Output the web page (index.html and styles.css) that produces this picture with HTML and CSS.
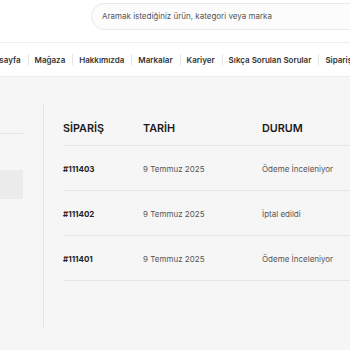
FILE: index.html
```html
<!DOCTYPE html>
<html lang="tr">
<head>
<meta charset="utf-8">
<link rel="stylesheet" href="styles.css">
</head>
<body>
<header class="top">
  <div class="search">Aramak istediğiniz ürün, kategori veya marka</div>
</header>
<nav class="nav">
  <a class="nav-item">Anasayfa</a><span class="sep"></span>
  <a class="nav-item">Mağaza</a><span class="sep"></span>
  <a class="nav-item">Hakkımızda</a><span class="sep"></span>
  <a class="nav-item">Markalar</a><span class="sep"></span>
  <a class="nav-item">Kariyer</a><span class="sep"></span>
  <a class="nav-item">Sıkça Sorulan Sorular</a><span class="sep"></span>
  <a class="nav-item">Siparişlerim</a>
</nav>
<main class="main">
  <aside class="side">
    <div class="side-head"></div>
    <div class="side-item active"></div>
  </aside>
  <section class="orders">
    <div class="row head">
      <div>SİPARİŞ</div><div>TARİH</div><div>DURUM</div>
    </div>
    <div class="row">
      <div class="id">#111403</div><div class="muted">9 Temmuz 2025</div><div class="muted">Ödeme İnceleniyor</div>
    </div>
    <div class="row">
      <div class="id">#111402</div><div class="muted">9 Temmuz 2025</div><div class="muted">İptal edildi</div>
    </div>
    <div class="row">
      <div class="id">#111401</div><div class="muted">9 Temmuz 2025</div><div class="muted">Ödeme İnceleniyor</div>
    </div>
  </section>
</main>
</body>
</html>
```
FILE: styles.css
```css
* { box-sizing: border-box; }
html, body { margin: 0; padding: 0; }
body {
  width: 350px;
  height: 350px;
  overflow: hidden;
  background: #f6f6f6;
  font-family: Inter, "Noto Sans", sans-serif;
  color: #222;
}
.top {
  background: #fff;
  height: 42px;
  padding: 3px 0 0 91px;
}
.search {
  width: 320px;
  height: 27px;
  border: 1px solid #e9e9e9;
  border-radius: 14px;
  background: #fcfcfc;
  padding-left: 10px;
  font-size: 8px;
  line-height: 25px;
  color: #555;
  white-space: nowrap;
}
.nav {
  display: flex;
  align-items: center;
  gap: 6px;
  height: 35px;
  background: #fff;
  border-top: 1px solid #efefef;
  border-bottom: 1px solid #ececec;
  margin-left: -16px;
  white-space: nowrap;
}
.nav-item {
  font-size: 8px;
  font-weight: 600;
  color: #333;
}
.sep {
  width: 1px;
  height: 11px;
  background: #e4e4e4;
  margin-left: 1px;
  flex: none;
}
.main {
  display: flex;
  margin-top: 27px;
}
.side {
  width: 44px;
  height: 224px;
  padding-right: 20px;
  border-right: 1px solid #e6e6e6;
  flex: none;
}
.side-head {
  height: 30px;
  border-bottom: 1px solid #e6e6e6;
}
.side-item {
  height: 29px;
  margin-top: 36px;
}
.side-item.active { background: #ebebeb; }
.orders {
  flex: 1;
  padding-left: 19px;
}
.row {
  display: grid;
  grid-template-columns: 80px 119px 1fr;
  align-items: center;
  height: 45px;
  padding-top: 1px;
  border-bottom: 1px solid #e6e6e6;
  font-size: 8px;
  white-space: nowrap;
}
.row.head {
  height: 42px;
  align-items: end;
  padding-top: 0;
  padding-bottom: 10px;
  font-size: 10.8px;
  font-weight: 600;
  color: #1a1a1a;
}
.id { font-weight: 700; color: #222; font-size: 8px; }
.muted { color: #555; }
```
